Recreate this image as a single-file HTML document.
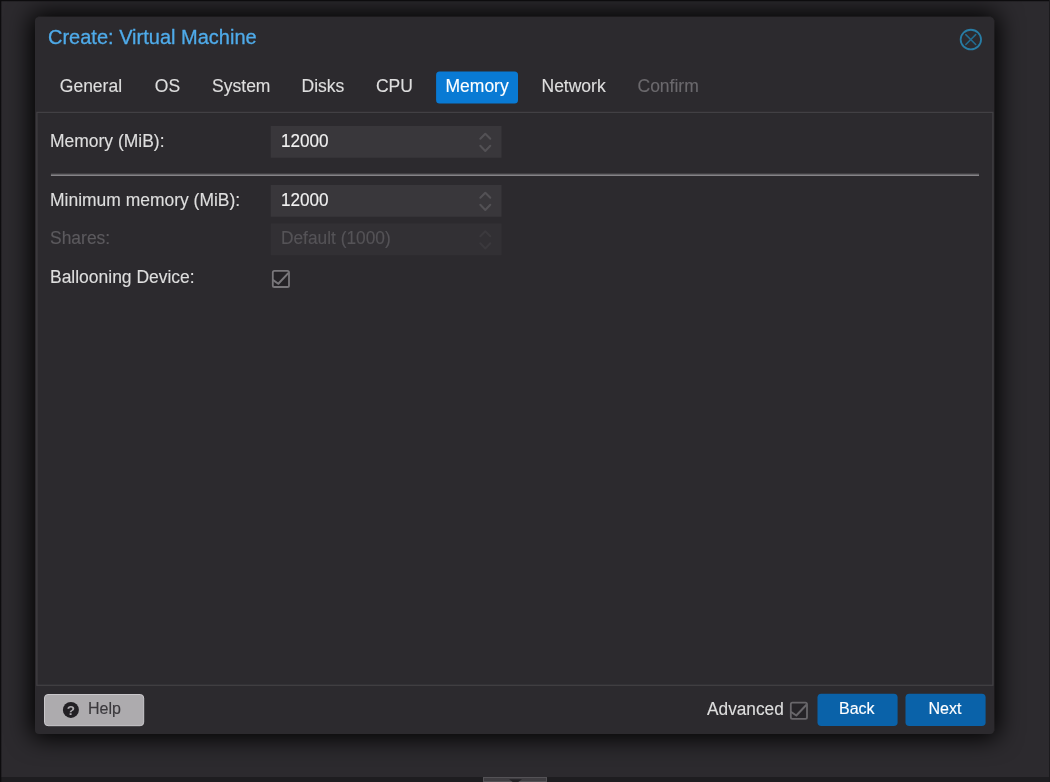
<!DOCTYPE html>
<html lang="en">
<head>
<meta charset="utf-8">
<title>Create: Virtual Machine</title>
<style>
*{box-sizing:border-box;margin:0;padding:0}
html,body{width:1050px;height:782px;overflow:hidden}
body{position:relative;background:#2c2a2e;font-family:"Liberation Sans",sans-serif;color:#dedede;-webkit-text-stroke:0.14px}
.abs{position:absolute}
.full{left:0;top:0;width:1050px;height:782px}
#layer{left:0;top:0;width:1050px;height:782px;will-change:transform}
#frame-top{left:0;top:0;width:1050px;height:2px;background:linear-gradient(#0d0c0e 0,#0d0c0e 1px,rgba(13,12,14,.25) 1px,rgba(13,12,14,.25) 2px)}
#frame-left{left:0;top:0;width:2px;height:782px;background:linear-gradient(90deg,#0d0c0e 0,#0d0c0e 1px,rgba(13,12,14,.35) 1px,rgba(13,12,14,.35) 2px)}
#frame-right{left:1049px;top:0;width:1px;height:782px;background:#1b1a1d}
#frame-bottom{left:0;top:777px;width:1050px;height:5px;background:#1e1d20}
#handle{left:483px;top:777px;width:64px;height:5px;background:#3f3d41;border:1px solid #545256}
#dialog{left:35px;top:17px;width:959px;height:717px;background:#2c2a2e;border-radius:4px;box-shadow:0 0 25px 3.5px #000}
#title{left:48px;top:25px;font-size:20px;line-height:24px;color:#4fabea;white-space:nowrap;-webkit-text-stroke:.3px}
.tab{top:71px;height:32.5px;font-size:17.5px;line-height:31px;white-space:nowrap;color:#dedede}
.tab.active{color:#fff}
.tab.disabled{color:#6b696d}
.lbl{left:50.3px;font-size:17.5px;line-height:20px;white-space:nowrap;color:#dedede;transform:scaleX(.998);transform-origin:0 0}
.lbl.dis{color:#5c5a5e}
.val{left:280.8px;font-size:17.5px;line-height:20px;color:#f2f2f2;white-space:nowrap}
.val.dis{color:#555357}
.btxt{font-size:16px;line-height:20px;white-space:nowrap;color:#fff}
#adv{left:707px;top:699px;transform:scaleX(.987);transform-origin:0 0;font-size:17.5px;line-height:20px;color:#dedede;white-space:nowrap}
</style>
</head>
<body>
<div class="abs" id="frame-bottom"></div>
<div class="abs" id="handle"></div>
<div class="abs" id="dialog"></div>
<div class="abs" style="left:38px;top:16px;width:953px;height:1px;background:rgba(44,42,46,.4)"></div>
<div class="abs" style="left:994px;top:20px;width:1px;height:711px;background:rgba(44,42,46,.4)"></div>
<div class="abs" id="frame-top"></div>
<div class="abs" id="frame-left"></div>
<div class="abs" id="frame-right"></div>

<div class="abs" id="layer">
<svg class="abs full" viewBox="0 0 1050 782">
<rect x="36.9" y="112.4" width="956" height="572.9" fill="none" stroke="#424044" stroke-width="1.25"/>
<rect x="436.1" y="71.55" width="81.9" height="32.0" rx="3.5" fill="#097ad4"/>
<rect x="270.7" y="126" width="230.8" height="31.75" fill="#39373b"/>
<rect x="270.7" y="185" width="230.8" height="31.75" fill="#39373b"/>
<rect x="270.7" y="223.5" width="230.8" height="31.75" fill="#323034"/>
<rect x="50.9" y="173.5" width="928.15" height="1.1" fill="#555357"/>
<rect x="50.9" y="174.55" width="928.15" height="1.4" fill="#8b898d"/>
<rect x="44.5" y="694.5" width="99.2" height="31.2" rx="3.5" fill="#adabae" stroke="#c9c7cb" stroke-width="1"/>
<rect x="817.5" y="693.8" width="80.1" height="32.2" rx="3.8" fill="#0a62a9"/>
<rect x="905.5" y="693.8" width="80.1" height="32.2" rx="3.8" fill="#0a62a9"/>
</svg>
<div class="abs" id="title">Create: Virtual Machine</div>
<div class="abs tab" style="left:59.8px">General</div>
<div class="abs tab" style="left:154.8px">OS</div>
<div class="abs tab" style="left:212.1px">System</div>
<div class="abs tab" style="left:301.5px">Disks</div>
<div class="abs tab" style="left:375.9px">CPU</div>
<div class="abs tab active" style="left:445.5px">Memory</div>
<div class="abs tab" style="left:541.5px">Network</div>
<div class="abs tab disabled" style="left:637.5px">Confirm</div>

<div class="abs lbl" style="top:131px">Memory (MiB):</div>
<div class="abs val" style="top:131px;transform:scaleX(.978);transform-origin:0 0">12000</div>
<div class="abs lbl" style="top:190px">Minimum memory (MiB):</div>
<div class="abs val" style="top:190px;transform:scaleX(.978);transform-origin:0 0">12000</div>
<div class="abs lbl dis" style="top:228px">Shares:</div>
<div class="abs val dis" style="top:228px;transform:scaleX(.989);transform-origin:0 0">Default (1000)</div>
<div class="abs lbl" style="top:267px">Ballooning Device:</div>

<div class="abs btxt" style="left:88px;top:699px;color:#3a383c">Help</div>
<div class="abs" id="adv">Advanced</div>
<div class="abs btxt" style="left:839px;top:699px">Back</div>
<div class="abs btxt" style="left:928.5px;top:699px">Next</div>
<svg class="abs full" viewBox="0 0 1050 782">
<ellipse cx="970.85" cy="39.55" rx="10.2" ry="9.8" fill="none" stroke="#287ca4" stroke-width="1.8"/>
<path d="M965.8 34.6 L975.7 44.5 M975.7 34.6 L965.8 44.5" stroke="#226c90" stroke-width="1.5" stroke-linecap="round" fill="none"/>
<path d="M480.3 138.8 L485.3 133.7 L490.3 138.8 M480.3 145.7 L485.3 151.0 L490.3 145.7" fill="none" stroke="#535155" stroke-width="2" stroke-linecap="round" stroke-linejoin="round"/>
<path d="M480.3 197.8 L485.3 192.7 L490.3 197.8 M480.3 204.7 L485.3 210.0 L490.3 204.7" fill="none" stroke="#535155" stroke-width="2" stroke-linecap="round" stroke-linejoin="round"/>
<path d="M480.3 236.3 L485.3 231.2 L490.3 236.3 M480.3 243.2 L485.3 248.5 L490.3 243.2" fill="none" stroke="#3b393d" stroke-width="2" stroke-linecap="round" stroke-linejoin="round"/>
<rect x="272.8" y="270.8" width="16.2" height="16.2" rx="1.6" fill="#242226" stroke="#78767a" stroke-width="1.8"/><path d="M272.8 279.9 L278.3 283.7 L288.5 272.9" fill="none" stroke="#78767a" stroke-width="2" stroke-linejoin="round"/>
<rect x="790.8" y="702.6" width="16.2" height="16.2" rx="1.6" fill="#262428" stroke="#68666a" stroke-width="1.8"/><path d="M790.8 711.7 L796.3 715.5 L806.5 704.7" fill="none" stroke="#68666a" stroke-width="2" stroke-linejoin="round"/>
<path d="M509 779.3 L522 779.3 L515.5 784 Z" fill="#222124"/>
<circle cx="70.9" cy="709.9" r="8" fill="#222024"/>
<text x="70.9" y="714.6" text-anchor="middle" font-family="Liberation Sans, sans-serif" font-weight="bold" font-size="13.5" fill="#adabae">?</text>
</svg>
</div>
</body>
</html>
